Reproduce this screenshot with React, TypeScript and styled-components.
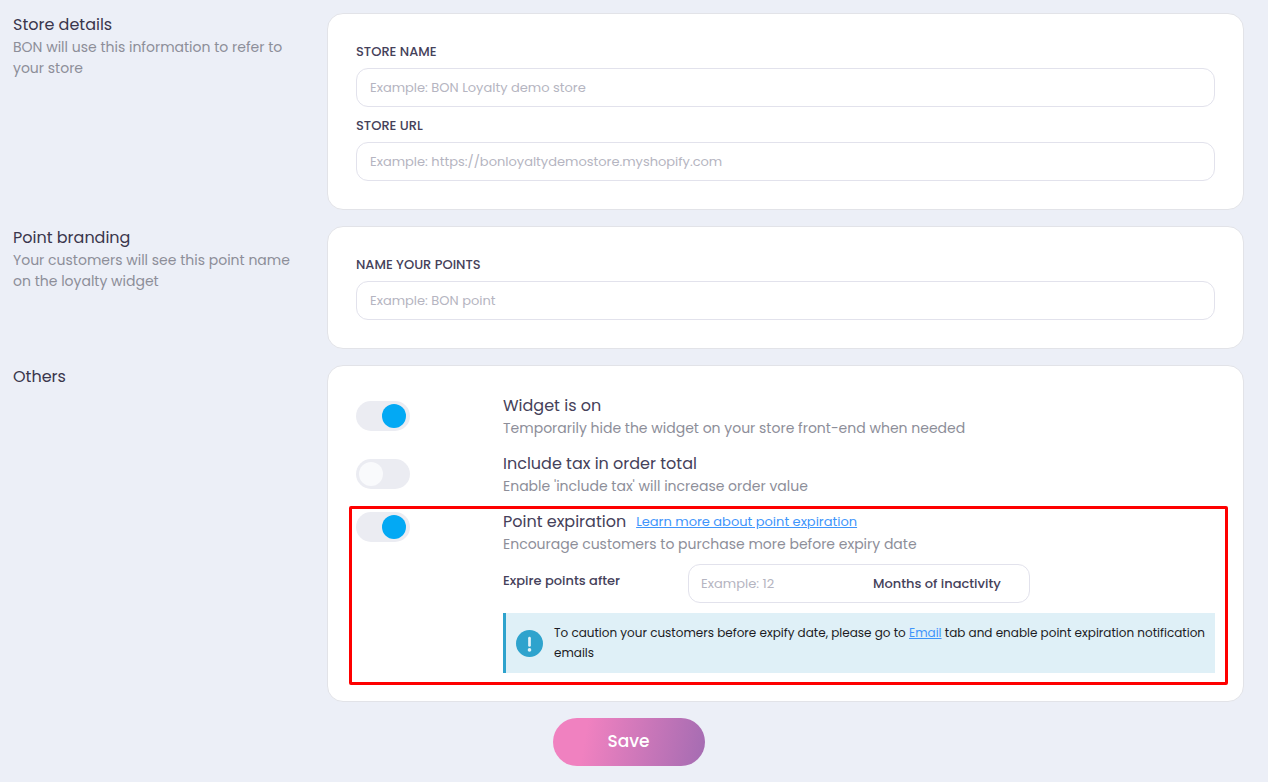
import React from 'react';
import styled, { createGlobalStyle } from 'styled-components';

const GlobalStyle = createGlobalStyle`
  *, *::before, *::after { box-sizing: border-box; }
  body {
    margin: 0;
    background: #eceff7;
    color: #45415a;
    font-family: Poppins, Inter, sans-serif;
    font-size: 13px;
  }
  input, button { font: inherit; color: inherit; }
  h2, h3, p { margin: 0; font-weight: 400; }
`;

const Page = styled.form`
  display: flex;
  flex-direction: column;
  gap: 16px;
  padding: 13px 24px 16px 13px;
`;

const Section = styled.section`
  display: grid;
  grid-template-columns: 290px minmax(0, 1fr);
  column-gap: 24px;
`;

const SectionTitle = styled.h2`
  font-size: 16px;
  line-height: 24px;
  color: #3a364c;
`;

const OptionTitle = styled.h3`
  font-size: 16px;
  line-height: 24px;
`;

const Description = styled.p`
  font-size: 14px;
  line-height: 21px;
  color: #8d8e99;
`;

const Card = styled.div<{ $gap: number }>`
  display: flex;
  flex-direction: column;
  gap: ${({ $gap }) => $gap}px;
  padding: 28px;
  background: #fff;
  border: 1px solid #e2e3e8;
  border-radius: 16px;
`;

const Field = styled.div`
  display: flex;
  flex-direction: column;
  gap: 6px;
`;

const FieldLabel = styled.label`
  line-height: 20px;
  font-weight: 500;
`;

const TextInput = styled.input`
  width: 100%;
  height: 39px;
  padding: 0 13px;
  background: #fff;
  border: 1px solid #e2e2ec;
  border-radius: 12px;
  outline: none;
  &::placeholder { color: #b5b5c1; opacity: 1; }
`;

const Option = styled.div<{ $highlighted?: boolean }>`
  position: relative;
  display: grid;
  grid-template-columns: 54px minmax(0, 1fr);
  column-gap: 93px;
  align-items: start;

  &::after {
    content: '';
    display: ${({ $highlighted }) => ($highlighted ? 'block' : 'none')};
    position: absolute;
    inset: -4px -13px -12px -7px;
    border: 3px solid #fe0000;
    border-radius: 2px;
    pointer-events: none;
  }

  > input {
    margin: ${({ $highlighted }) => ($highlighted ? 2 : 7)}px 0 0;
  }
`;

const Toggle = styled.input`
  appearance: none;
  display: block;
  width: 54px;
  height: 30px;
  padding: 3px;
  border-radius: 15px;
  background: #ebecf2;
  cursor: pointer;

  &::before {
    content: '';
    display: block;
    width: 24px;
    height: 24px;
    border-radius: 50%;
    background: #f9fafc;
  }
  &:checked::before {
    margin-left: 23px;
    background: #03a9f4;
  }
`;

const TitleLine = styled.div`
  display: flex;
  align-items: center;
  gap: 10px;
`;

const Link = styled.a`
  color: #3f95fb;
  text-decoration: underline;
`;

const ExpiryRow = styled.div`
  display: grid;
  grid-template-columns: minmax(0, 26fr) minmax(0, 48fr) minmax(0, 26fr);
  margin: 9px 0 10px;
`;

const ExpiryLabel = styled.label`
  line-height: 33px;
  font-weight: 500;
`;

const UnitInput = styled.div`
  display: flex;
  align-items: center;
  height: 39px;
  padding: 0 28px 0 12px;
  border: 1px solid #e2e2ec;
  border-radius: 12px;

  input {
    flex: 1;
    min-width: 0;
    padding: 0;
    border: 0;
    outline: none;
    background: transparent;
  }
  input::placeholder { color: #b5b5c1; opacity: 1; }
  span { font-weight: 500; }
`;

const Notice = styled.div`
  display: flex;
  align-items: center;
  gap: 11px;
  padding: 10px 8px 10px 10px;
  border-left: 3px solid #2ea3cd;
  background: #dff0f7;
  color: #1c1c24;

  svg { flex: none; }
  p { font-size: 12px; line-height: 20px; }
`;

const SaveButton = styled.button`
  align-self: center;
  width: 152px;
  height: 48px;
  padding: 0 0 2px;
  border: 0;
  border-radius: 24px;
  background: linear-gradient(100deg, #f081c0 22%, #a46cb2 100%);
  color: #fff;
  font-size: 17px;
  line-height: 24px;
  font-weight: 500;
  cursor: pointer;
`;

const AlertIcon = () => (
  <svg width="27" height="27" viewBox="0 0 27 27" aria-hidden="true">
    <circle cx="13.5" cy="13.5" r="13.5" fill="#2ea3cd" />
    <path d="M13.5 8.2v7.2" stroke="#e2f3f9" strokeWidth="2.7" strokeLinecap="round" />
    <circle cx="13.5" cy="19.9" r="1.8" fill="#e2f3f9" />
  </svg>
);

type TextFieldProps = { id: string; label: string; placeholder: string };

const TextField = ({ id, label, placeholder }: TextFieldProps) => (
  <Field>
    <FieldLabel htmlFor={id}>{label}</FieldLabel>
    <TextInput id={id} type="text" placeholder={placeholder} />
  </Field>
);

export default function App() {
  return (
    <>
      <GlobalStyle />
      <Page onSubmit={(e) => e.preventDefault()}>
        <Section>
          <div>
            <SectionTitle>Store details</SectionTitle>
            <Description>BON will use this information to refer to your store</Description>
          </div>
          <Card $gap={9}>
            <TextField id="store-name" label="STORE NAME" placeholder="Example: BON Loyalty demo store" />
            <TextField
              id="store-url"
              label="STORE URL"
              placeholder="Example: https://bonloyaltydemostore.myshopify.com"
            />
          </Card>
        </Section>

        <Section>
          <div>
            <SectionTitle>Point branding</SectionTitle>
            <Description>Your customers will see this point name on the loyalty widget</Description>
          </div>
          <Card $gap={9}>
            <TextField id="point-name" label="NAME YOUR POINTS" placeholder="Example: BON point" />
          </Card>
        </Section>

        <Section>
          <SectionTitle>Others</SectionTitle>
          <Card $gap={13}>
            <Option>
              <Toggle id="widget" type="checkbox" defaultChecked />
              <div>
                <OptionTitle><label htmlFor="widget">Widget is on</label></OptionTitle>
                <Description>Temporarily hide the widget on your store front-end when needed</Description>
              </div>
            </Option>
            <Option>
              <Toggle id="tax" type="checkbox" />
              <div>
                <OptionTitle><label htmlFor="tax">Include tax in order total</label></OptionTitle>
                <Description>Enable 'include tax' will increase order value</Description>
              </div>
            </Option>
            <Option $highlighted>
              <Toggle id="expiration" type="checkbox" defaultChecked />
              <div>
                <TitleLine>
                  <OptionTitle><label htmlFor="expiration">Point expiration</label></OptionTitle>
                  <Link href="#expiration-help">Learn more about point expiration</Link>
                </TitleLine>
                <Description>Encourage customers to purchase more before expiry date</Description>
                <ExpiryRow>
                  <ExpiryLabel htmlFor="months">Expire points after</ExpiryLabel>
                  <UnitInput>
                    <input id="months" type="text" placeholder="Example: 12" />
                    <span>Months of inactivity</span>
                  </UnitInput>
                </ExpiryRow>
                <Notice>
                  <AlertIcon />
                  <p>
                    To caution your customers before expify date, please go to{' '}
                    <Link href="#email">Email</Link> tab and enable point expiration notification emails
                  </p>
                </Notice>
              </div>
            </Option>
          </Card>
        </Section>

        <SaveButton type="submit">Save</SaveButton>
      </Page>
    </>
  );
}
